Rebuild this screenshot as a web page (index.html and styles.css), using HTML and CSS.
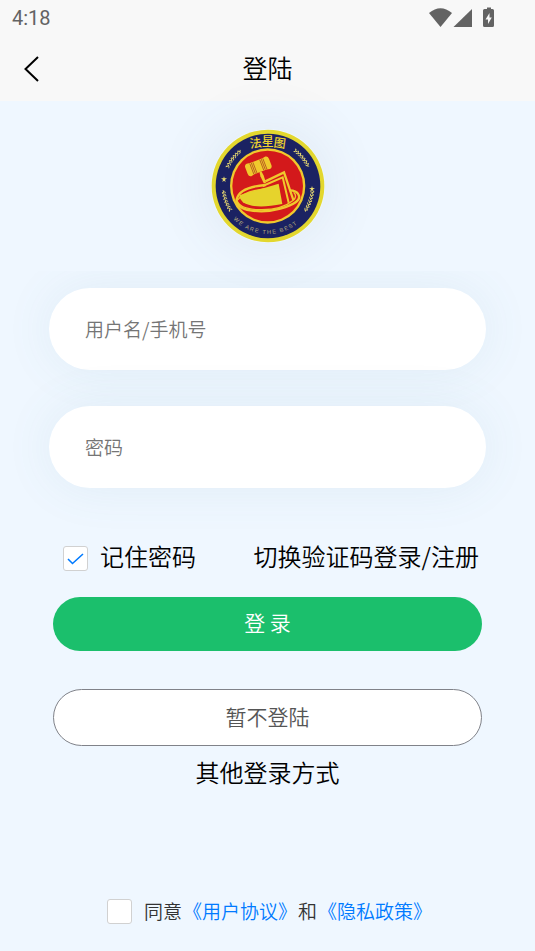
FILE: index.html
```html
<!DOCTYPE html>
<html lang="zh-CN">
<head>
    <meta charset="UTF-8">
    <title>登陆</title>
    <meta name="viewport" content="width=device-width, initial-scale=1.0">
    <link rel="stylesheet" href="styles.css">
</head>
<body>
    <header class="header">
        <div class="status-bar">
            <span class="time">4:18</span>
            <svg class="status-icons" width="68" height="22" viewBox="0 0 68 22" fill="#636363" aria-hidden="true">
                <path d="M-1 6Q10.500 -3.500 22 6L10.500 20Z"/>
                <path d="M42 2V20H23.500Z"/>
                <path fill-rule="evenodd" d="M57 2V0.500h4V2h1.500q1.500 0 1.500 1.500v15q0 1.500-1.500 1.500h-8q-1.500 0-1.500-1.500v-15q0-1.500 1.500-1.500ZM59.500 6L55.500 12.500H58V17L61.800 10.500H59.500Z"/>
            </svg>
        </div>
        <div class="nav-bar">
            <button class="back-button" type="button" aria-label="返回">
                <svg width="16" height="28" viewBox="0 0 16 28" fill="none" stroke="#000" stroke-width="2"><path d="M14 2L1.500 14L14 26"/></svg>
            </button>
            <h1>登陆</h1>
        </div>
    </header>

    <main class="content">
        <div class="logo">
            <svg viewBox="0 0 342 342" role="img" aria-label="法星图">
                <defs>
                    <path id="motto" d="M27 171A144 144 0 0 0 315 171"/>
                    <path id="leaf" d="M171 38l-5-6 4-1 3 5 4-3-1 6Z M170 39l-4 4 6-1 2-3Z"/>
                    <g id="branch">
                        <use href="#leaf" transform="rotate(-13 171 171)"/>
                        <use href="#leaf" transform="rotate(-9 171 171)"/>
                        <use href="#leaf" transform="rotate(-5 171 171)"/>
                        <use href="#leaf" transform="rotate(-1 171 171)"/>
                        <use href="#leaf" transform="rotate(3 171 171)"/>
                        <use href="#leaf" transform="rotate(7 171 171)"/>
                        <use href="#leaf" transform="rotate(11 171 171)"/>
                    </g>
                    <path id="star" d="M0-9L2-3H9L3 1 5 8 0 4-5 8-3 1-9-3H-2Z"/>
                </defs>
                <circle cx="171" cy="171" r="169" fill="#e3d72e"/>
                <circle cx="171" cy="171" r="157" fill="#1b2262"/>
                <circle cx="170" cy="171" r="113" fill="#f0c92d"/>
                <circle cx="170" cy="171" r="106" fill="#d3191b"/>

                <g fill="#eadb70">
                    <use href="#branch" transform="rotate(-51 171 171)"/>
                    <use href="#branch" transform="rotate(-109 171 171)"/>
                    <use href="#branch" transform="rotate(51 171 171)"/>
                    <use href="#branch" transform="rotate(111 171 171)"/>
                    <use href="#star" x="39" y="151"/>
                    <use href="#star" x="303" y="180"/>
                </g>

                <g class="logo-name">
                    <text x="134" y="55" transform="rotate(-8 134 43)">法</text>
                    <text x="170" y="51">星</text>
                    <text x="206" y="55" transform="rotate(8 206 43)">图</text>
                </g>
                <text class="logo-motto"><textPath href="#motto" startOffset="48%">WE ARE THE BEST</textPath></text>

                <!-- law book -->
                <g fill="none" stroke="#f0c92d" stroke-width="7">
                    <path d="M164 168Q86 174 77 211C70 246 150 255 208 239C251 227 272 212 262 196Q256 184 236 184"/>
                    <path d="M164 179Q96 187 80 213" stroke-width="4"/>
                    <path d="M77 211Q83 239 140 242Q210 245 247 214Q260 202 248 190" stroke-width="4"/>
                </g>
                <path d="M87 198L203 164L214 225Q130 242 96 220Q82 208 87 198Z" fill="#e6d32c"/>
                <g fill="none" stroke="#f0c92d" stroke-width="6">
                    <path d="M155 171L215 145L233 221"/>
                    <path d="M163 157L219 130L247 213" stroke-width="7"/>
                </g>
                <path d="M207 160L213 158 228 221 218 225Z" fill="#d3191b"/>

                <!-- gavel -->
                <g transform="rotate(-21 142 112)">
                    <path d="M139 130h6l2 12-1 24h-7l-2-24Z" fill="#f0c92d"/>
                    <path d="M112 92q-8 1-8 10v20q0 9 8 10l10-2h40l10 2q8-1 8-10v-20q0-9-8-10l-10 2h-40Z" fill="#f0c92d"/>
                    <path d="M121 95v34M126 95v34M131 95v34M153 95v34M158 95v34M163 95v34" stroke="#a63b1c" stroke-width="2"/>
                </g>
            </svg>
        </div>

        <form class="login-form">
            <div class="fields">
                <input class="text-input" type="text" placeholder="用户名/手机号" aria-label="用户名/手机号">
                <input class="text-input" type="password" placeholder="密码" aria-label="密码">
            </div>

            <div class="options">
                <label class="remember"><input class="checkbox" type="checkbox" checked>记住密码</label>
                <a href="#">切换验证码登录/注册</a>
            </div>

            <div class="actions">
                <button class="submit-button" type="submit">登 录</button>
                <button class="skip-button" type="button">暂不登陆</button>
            </div>
        </form>

        <p class="other-login">其他登录方式</p>

        <div class="agreement">
            <input class="checkbox" type="checkbox" id="agree">
            <p><label for="agree">同意</label><a href="#">《用户协议》</a><span>和</span><a href="#">《隐私政策》</a></p>
        </div>
    </main>
</body>
</html>
```
FILE: styles.css
```css
* {
    box-sizing: border-box;
}

body {
    font-family: "Noto Sans CJK SC", sans-serif;
    font-weight: 350;
    background-color: #eff7ff;
    color: #000;
    margin: 0;
    min-height: 100vh;
    display: flex;
    flex-direction: column;
}

h1,
p {
    margin: 0;
}

a {
    color: inherit;
    text-decoration: none;
}

button,
input {
    font-family: inherit;
    font-weight: inherit;
}

.header {
    background-color: #f8f8f8;
}

.status-bar {
    display: flex;
    align-items: center;
    justify-content: space-between;
    height: 36px;
    padding: 0 37px 0 12px;
}

.status-icons {
    overflow: visible;
}

.time {
    font-family: Roboto, sans-serif;
    font-size: 20px;
    font-weight: 400;
    line-height: 36px;
    color: #636363;
}

.nav-bar {
    display: grid;
    grid-template-columns: 48px 1fr 48px;
    align-items: center;
    height: 65px;
}

.nav-bar h1 {
    font-size: 25px;
    font-weight: inherit;
    line-height: 36px;
    padding-bottom: 4px;
    text-align: center;
}

.back-button {
    display: flex;
    justify-content: flex-end;
    padding: 0 8px;
    border: none;
    background: none;
    cursor: pointer;
}

.content {
    flex: 1;
    display: flex;
    flex-direction: column;
}

.logo {
    width: 114px;
    height: 114px;
    margin: 28px auto;
    border-radius: 50%;
    box-shadow: 0 0 60px rgba(80, 100, 130, 0.11);
}

.logo svg {
    display: block;
}

.logo-name {
    font-size: 36px;
    font-weight: 500;
    fill: #f0d52d;
    text-anchor: middle;
}

.logo-motto {
    font-family: "Liberation Sans", sans-serif;
    font-size: 17px;
    letter-spacing: 4px;
    fill: #b9ad7c;
    text-anchor: middle;
}

.fields {
    display: flex;
    flex-direction: column;
    gap: 36px;
    padding: 17px 49px 56px;
    overflow: hidden;
}

.text-input {
    width: 100%;
    height: 82px;
    padding: 0 36px 2px;
    border: none;
    border-radius: 41px;
    background-color: #fff;
    box-shadow: 0 0 50px rgba(80, 130, 160, 0.09);
    font-size: 19px;
    outline: none;
}

.text-input::placeholder {
    color: #757575;
}

.options {
    display: flex;
    justify-content: space-between;
    padding: 0 56px 0 63px;
    font-size: 24px;
    line-height: 24px;
}

.remember {
    display: flex;
    gap: 12px;
}

.checkbox {
    appearance: none;
    flex: none;
    width: 25px;
    height: 25px;
    margin: 0;
    border: 1px solid #d1d1d1;
    border-radius: 3px;
    background-color: #fff;
}

.remember .checkbox {
    margin-top: 2px;
}

.checkbox:checked {
    background: #fff url("data:image/svg+xml,%3Csvg xmlns='http://www.w3.org/2000/svg' viewBox='0 0 23 23' fill='none' stroke='%23007aff' stroke-width='1.6'%3E%3Cpath d='M4 12L8.500 16.500L19 7'/%3E%3C/svg%3E");
}

.actions {
    display: flex;
    flex-direction: column;
    gap: 38px;
    padding: 26px 53px 12px;
}

.submit-button,
.skip-button {
    height: 54px;
    padding: 0 0 4px;
    border: none;
    border-radius: 29px;
    font-size: 21px;
    cursor: pointer;
}

.submit-button {
    background-color: #1bbf6c;
    color: #fff;
}

.skip-button {
    height: 57px;
    border: 1px solid #808289;
    background-color: #fff;
    color: #555;
}

.other-login {
    font-size: 24px;
    line-height: 28px;
    text-align: center;
}

.agreement {
    display: flex;
    align-items: center;
    justify-content: center;
    gap: 12px;
    margin-top: auto;
    padding: 24px 0 26px 4px;
    font-size: 19px;
    line-height: 28px;
    color: #333;
}

.agreement p {
    display: flex;
    gap: 1px;
}

.agreement a {
    color: #007aff;
}
```
